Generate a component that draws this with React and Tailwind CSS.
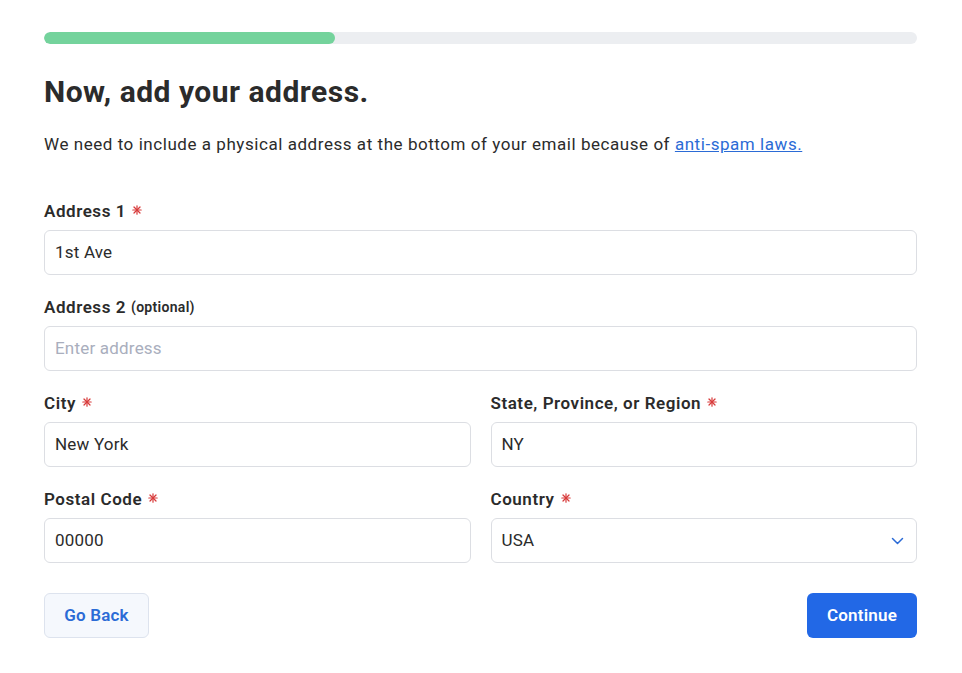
import React from "react";

const Star = () => (
  <svg width="10" height="10" viewBox="0 0 10 10" className="inline-block ml-[6px] relative top-[-1px]" stroke="#d83a3a" strokeWidth="1.2" strokeLinecap="round">
    <line x1="5" y1="0.8" x2="5" y2="9.2" />
    <line x1="0.8" y1="5" x2="9.2" y2="5" />
    <line x1="2" y1="2" x2="8" y2="8" />
    <line x1="8" y1="2" x2="2" y2="8" />
  </svg>
);

const Label = ({ children, req, extra }) => (
  <div className="text-[17px] leading-6 font-semibold tracking-[0.55px] text-[#2b2b2b] flex items-center">
    <span>{children}</span>
    {extra && <span className="ml-[5px] text-[14px] tracking-[0.3px] font-semibold">{extra}</span>}
    {req && <Star />}
  </div>
);

const Input = ({ value, placeholder }) => (
  <div className="mt-[7px] h-[45px] rounded-[6px] border border-[#dcdee3] bg-white flex items-center px-[10px] text-[17px] tracking-[0.2px]">
    {value ? (
      <span className="text-[#2b2b2b]">{value}</span>
    ) : (
      <span className="text-[#a9aebd]">{placeholder}</span>
    )}
  </div>
);

export default function App() {
  return (
    <div className="min-h-screen bg-white px-[44px] pt-[32px] w-[962px]" style={{ fontFamily: "Roboto, 'Liberation Sans', sans-serif" }}>
      <div className="w-[873px]">
        <div className="h-3 rounded-full bg-[#eceef1] overflow-hidden">
          <div className="h-3 w-[291px] rounded-full bg-[#74d39c]" />
        </div>
        <h1 className="mt-[30px] text-[30px] leading-9 font-bold tracking-[0.5px] text-[#2b2b2b]">Now, add your address.</h1>
        <p className="mt-[22px] text-[17px] leading-6 tracking-[0.55px] text-[#2b2b2b]">
          We need to include a physical address at the bottom of your email because of{" "}
          <a className="text-[#2b6bd6] underline">anti-spam laws.</a>
        </p>
        <div className="mt-[43px] flex flex-col gap-5">
          <div>
            <Label req>Address 1</Label>
            <Input value="1st Ave" />
          </div>
          <div>
            <Label extra="(optional)">Address 2</Label>
            <Input placeholder="Enter address" />
          </div>
          <div className="grid grid-cols-2 gap-5">
            <div>
              <Label req>City</Label>
              <Input value="New York" />
            </div>
            <div>
              <Label req>State, Province, or Region</Label>
              <Input value="NY" />
            </div>
          </div>
          <div className="grid grid-cols-2 gap-5">
            <div>
              <Label req>Postal Code</Label>
              <Input value="00000" />
            </div>
            <div>
              <Label req>Country</Label>
              <div className="mt-[7px] h-[45px] rounded-[6px] border border-[#dcdee3] bg-white flex items-center justify-between pl-[10px] pr-[12px] text-[17px] tracking-[0.2px]">
                <span className="text-[#2b2b2b]">USA</span>
                <svg width="13" height="8" viewBox="0 0 13 8" fill="none" stroke="#2b6bd6" strokeWidth="1.5" strokeLinecap="round" strokeLinejoin="round">
                  <path d="M1.5 1.5L6.5 6.5L11.5 1.5" />
                </svg>
              </div>
            </div>
          </div>
        </div>
        <div className="mt-[30px] flex justify-between">
          <button className="h-[45px] w-[105px] rounded-[6px] border border-[#dde3ee] bg-[#f5f8fd] text-[#2b6bd6] text-[17px] tracking-[0.2px] font-semibold">
            Go Back
          </button>
          <button className="h-[45px] w-[110px] rounded-[6px] bg-[#2268e6] text-white text-[17px] tracking-[0.2px] font-semibold">
            Continue
          </button>
        </div>
      </div>
    </div>
  );
}
